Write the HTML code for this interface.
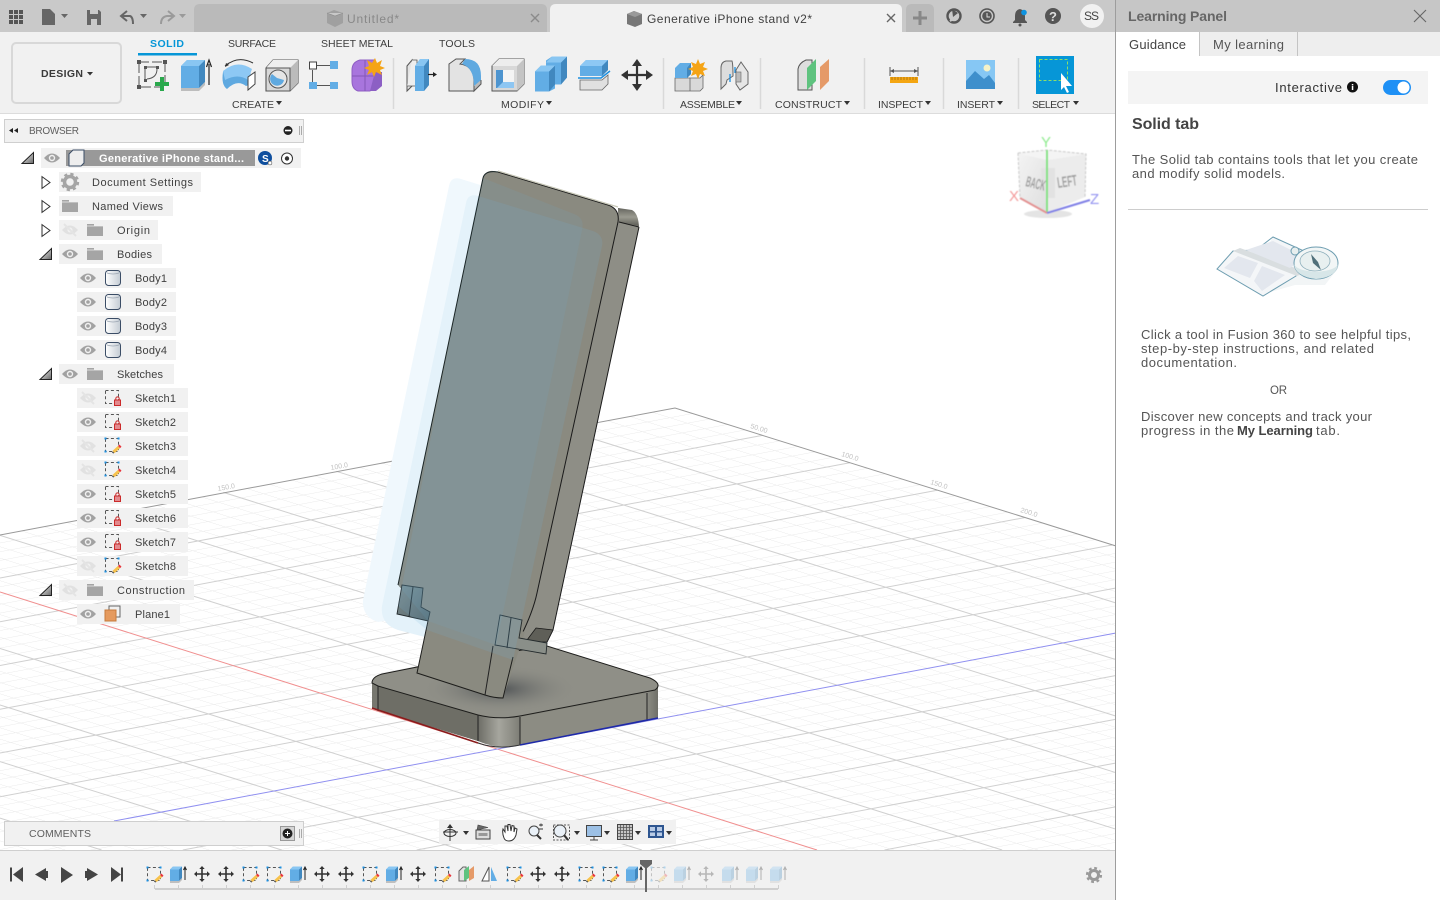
<!DOCTYPE html>
<html><head><meta charset="utf-8"><title>Fusion 360</title>
<style>
html,body{margin:0;padding:0;background:#fff;width:1440px;height:900px;overflow:hidden}
svg{display:block;position:absolute;left:0;top:0}
text{font-family:"Liberation Sans",sans-serif;font-size:11px;fill:#3c3c3c}
.t{font-size:11px;fill:#3f3f3f}
.u{font-size:10.5px;fill:#3c3c3c}
.p{font-size:13px;fill:#555}
.g{font-size:7px;fill:#c2c2c2}
</style></head><body>
<svg width="1440" height="900" viewBox="0 0 1440 900" xmlns="http://www.w3.org/2000/svg">
<defs>
<pattern id="grid" patternUnits="userSpaceOnUse" width="87.4" height="112.9" patternTransform="matrix(1 .314 1 -.187 675 408)">
<g stroke="#ebebeb" stroke-width="1" fill="none">
<path d="M17.5 0V113M35 0V113M52.4 0V113M70 0V113M0 22.6H88M0 45.2H88M0 67.7H88M0 90.3H88"/>
</g>
</pattern>
<filter id="soft" x="-10%" y="-10%" width="120%" height="120%"><feGaussianBlur stdDeviation=".55"/></filter>
<linearGradient id="corner" x1="0" x2="1" y1="0" y2="0"><stop offset="0" stop-color="#6d6d66"/><stop offset=".5" stop-color="#a6a69e"/><stop offset="1" stop-color="#7d7d75"/></linearGradient>
<linearGradient id="cornerR" x1="0" x2="1" y1="0" y2="0"><stop offset="0" stop-color="#8c8c84"/><stop offset="1" stop-color="#6f6f68"/></linearGradient>
<linearGradient id="top" x1="0" x2="0" y1="0" y2="1"><stop offset="0" stop-color="#66665f"/><stop offset=".5" stop-color="#9a9a90"/><stop offset="1" stop-color="#5c5c55"/></linearGradient>
<radialGradient id="shadow" cx=".5" cy=".5" r=".5"><stop offset="0" stop-color="#4c5053" stop-opacity=".95"/><stop offset="1" stop-color="#8f8f87" stop-opacity="0"/></radialGradient>
<linearGradient id="tab" x1="0" x2="1" y1="0" y2="1"><stop offset="0" stop-color="#7f8d8e"/><stop offset="1" stop-color="#55666b"/></linearGradient>
<linearGradient id="cube" x1="0" x2="1" y1="0" y2="1"><stop offset="0" stop-color="#f4f4f4"/><stop offset="1" stop-color="#dedede"/></linearGradient>
<linearGradient id="cyl" x1="0" x2="1" y1="0" y2="0"><stop offset="0" stop-color="#fff"/><stop offset="1" stop-color="#c4ccd4"/></linearGradient>

<symbol id="eye" viewBox="0 0 16 12" overflow="visible"><path d="M0 6Q8-3 16 6 8 15 0 6Z" fill="#a2a2a2"/><circle cx="8" cy="6" r="3.2" fill="#f1f1f1"/><circle cx="8" cy="6" r="1.8" fill="#a2a2a2"/></symbol>
<symbol id="eyeoff" viewBox="0 0 16 12" overflow="visible"><path d="M0 6Q8-3 16 6 8 15 0 6Z" fill="#e1e1e1"/><circle cx="8" cy="6" r="2.5" fill="#f1f1f1"/><path d="M2 0L14 12" stroke="#e4e4e4" stroke-width="2"/></symbol>
<symbol id="folder" viewBox="0 0 16 12" overflow="visible"><path d="M0 0H7V2H16V12H0Z" fill="#a5a5a5"/><path d="M0 2H16" stroke="#f1f1f1" stroke-width=".7"/></symbol>
<symbol id="bd" viewBox="0 0 16 16" overflow="visible"><rect x=".5" y=".5" width="15" height="15" rx="3" fill="url(#cyl)" stroke="#3b4d66"/><path d="M2 3Q8 5 14 3" fill="none" stroke="#9ca6b2" stroke-width=".8"/></symbol>
<symbol id="skl" viewBox="0 0 16 16" overflow="visible"><rect x=".5" y=".5" width="13" height="13" fill="none" stroke="#555" stroke-dasharray="3 2.4"/><rect x="9.5" y="10" width="6" height="5.5" fill="#e38a8e" stroke="#cb2a2a"/><path d="M10.8 10V8.6a1.7 1.7 0 013.4 0V10" fill="none" stroke="#cb2a2a"/></symbol>
<symbol id="skp" viewBox="0 0 16 16" overflow="visible"><rect x=".5" y=".5" width="13" height="13" fill="none" stroke="#555" stroke-dasharray="3 2.4"/><g fill="#1c8fe0"><rect x="-.5" y="-.5" width="2" height="2"/><rect x="12.5" y="-.5" width="2" height="2"/><rect x="-.5" y="12.5" width="2" height="2"/></g><path d="M8.5 14L14 9" stroke="#f7c24c" stroke-width="3"/><path d="M14 9l1.5-1.4" stroke="#e8343b" stroke-width="3"/><path d="M8.5 14L7.6 15" stroke="#555" stroke-width="2"/></symbol>
<symbol id="ext" viewBox="0 0 16 18" overflow="visible"><path d="M0 3.5L3 .5H12V12L9 15H0Z" fill="#62ade5"/><path d="M9 3.5L12 .5V12L9 15Z" fill="#4188bf"/><path d="M0 3.5L3 .5H12L9 3.5Z" fill="#89c6f2"/><path d="M0 15H9L12 12V14L9 17H0Z" fill="#bfbfbf"/><path d="M15 14V2M13.5 4L15 1 16.5 4" stroke="#222" fill="none" stroke-width="1"/></symbol>
<symbol id="mv" viewBox="0 0 16 16" overflow="visible"><path d="M8 2V14M2 8H14" stroke="#333" stroke-width="1.6"/><path d="M8 0L5.3 3H10.7ZM8 16L5.3 13H10.7ZM0 8L3 5.3V10.7ZM16 8L13 5.3V10.7Z" fill="#333"/></symbol>
<symbol id="tri" viewBox="0 0 12 12" overflow="visible"><path d="M0 11.5L11.5 .5V11.5Z" fill="url(#triG)" stroke="#222"/></symbol>
<linearGradient id="triG" x1="0" x2="1" y1="0" y2="1"><stop offset="0" stop-color="#fff"/><stop offset="1" stop-color="#666"/></linearGradient>
<symbol id="tro" viewBox="0 0 10 14" overflow="visible"><path d="M.7.7L9.3 7 .7 13.3Z" fill="#fff" stroke="#333" stroke-width="1.1"/></symbol>
</defs>

<!-- canvas -->
<rect width="1116" height="900" fill="#fff"/>
<polygon points="675,408 1116,546 1116,850 0,850 0,535" fill="url(#grid)"/>
<g fill="none" stroke="#d0d0d0" stroke-width="1">
<path d="M562.100 429.100L1116 603M449.200 450.200L1116 659.600M336.300 471.300L1116 716.100M223.400 492.400L1116 772.700M110.500 513.500L1116 829.200M0 535.400L1002.100 850M0 648.500L641.800 850M0 705L461.800 850M0 761.600L281.700 850M0 818.100L101.600 850"/>
<path d="M762.400 435.400L0 578M849.800 462.800L0 621.700M937.200 490.200L0 665.500M1024.600 517.600L0 709.200M1112 545L0 753M1116 588L0 796.700M1116 675.500L182.800 850M1116 719.200L416.700 850M1116 763L650.600 850M1116 806.700L884.500 850"/>
</g>
<path d="M0 535L675 408 1116 546" fill="none" stroke="#999" stroke-width="1"/>
<path d="M0 592L817 850" stroke="#f08f8f" stroke-width="1"/>
<path d="M114 821L1116 633" stroke="#8f8ff0" stroke-width="1"/>
<text class="g" transform="translate(218 491) rotate(-10)">150.0</text>
<text class="g" transform="translate(331 470) rotate(-10)">100.0</text>
<text class="g" transform="translate(750 428) rotate(17)">50.00</text>
<text class="g" transform="translate(841 456) rotate(17)">100.0</text>
<text class="g" transform="translate(930 484) rotate(17)">150.0</text>
<text class="g" transform="translate(1020 512) rotate(17)">200.0</text>

<!-- ghost phones on white -->
<path d="M449 186Q451 176 461 179L574 214Q585 218 582 230L505 603 378 622Q362 617 363 600Z" fill="#f0f8fd"/>
<path d="M466 203Q468 193 478 196L593 231Q604 235 602 246L513 660 398 630Q380 624 382 606Z" fill="#e4f2fa"/>

<!-- base -->
<path d="M372 683V708L478 741Q500 750 520 745L658 718V687L500 700Z" fill="#87877e"/>
<path d="M372 683V708L378 711V686Z" fill="#77776f"/>
<path d="M378 686V711L478 741V715Z" fill="#6e6e66"/>
<path d="M478 715V741Q498 750 520 745V717Z" fill="url(#corner)"/>
<path d="M520 717V745L647 721V693Z" fill="#8c8c83"/>
<path d="M647 693V721L658 718V687Z" fill="url(#cornerR)"/>
<path d="M372 683Q372 677 382 674L417 667 547 646 650 678Q663 684 655 690L520 716Q498 720 478 715L378 686Z" fill="#8f8f87" stroke="#1d1d1b" stroke-width="1"/>
<ellipse cx="500" cy="689" rx="78" ry="24" fill="url(#shadow)"/>
<path d="M378 686V711M478 715V741M520 717V745M647 693V721" stroke="#222" stroke-width="1"/>
<path d="M372 708L478 743" stroke="#8a1c1c" stroke-width="1.600"/>
<path d="M520 745L658 718" stroke="#1f2aa8" stroke-width="1.600"/>
<path d="M478 743Q498 750 520 745" stroke="#333" fill="none"/>

<!-- side of phone -->
<path d="M618 208L632 211 639 227 553 630 547 642 520 638 537 593 618 222Z" fill="#8e8e86"/>
<path d="M618 208L632 210Q638 213 639 226L619 222Z" fill="url(#top)"/>
<path d="M619 222L639 227M639 227L553 630 547 642" stroke="#1a1a1a" fill="none"/>
<!-- plate -->
<path d="M483 178Q486 168 498 172L608 205Q620 209 618 222L537 593Q533 612 520 638L432 625 398 585Z" fill="#8a8a80"/>
<path d="M498 172L608 205Q620 209 618 222L537 593Q533 612 520 638" fill="none" stroke="#1a1a1a" stroke-width="1"/>
<path d="M498 171L618 207" stroke="#c8c8b8" stroke-width="1.200"/>
<path d="M536 628L553 630 547 642Q535 642 527 640Z" fill="#5f5f58" stroke="#1a1a1a" stroke-width=".8"/>
<!-- stem -->
<path d="M432 605L525 632 503 698Q494 698 485 695L417 673Z" fill="#8a8a80"/>
<path d="M428 621L417 673 485 695Q494 698 503 698L513 657" fill="none" stroke="#1d1d1b"/>
<path d="M493 646L485 695" stroke="#222"/>
<!-- tabs -->
<path d="M402 585L423 588 421 607 430 612 428 621 397 614Z" fill="url(#tab)" stroke="#232a2c" stroke-width=".9"/>
<path d="M413 587L409 617" stroke="#232a2c"/>
<path d="M500 615L522 620 519 638 547 643 546 654 495 645Z" fill="#8a8f89" stroke="#232a2c" stroke-width=".9"/>
<path d="M511 618L507 648" stroke="#232a2c"/>
<!-- ghosts over model -->
<path d="M483 178L574 214Q585 218 582 230L505 603 496 645 428 621 398 585Z" fill="#6fb8dc" fill-opacity=".11"/>
<path d="M478 196L593 231Q604 235 602 246L513 660 427 630 398 606Z" fill="#6fb8dc" fill-opacity=".15"/>
<path d="M483 178L398 585" stroke="#1a2526" stroke-width="1" fill="none"/>
<path d="M483 178Q485 170 498 172" stroke="#1a2526" fill="none"/>

<!-- viewcube -->
<g filter="url(#soft)">
<ellipse cx="1048" cy="214" rx="24" ry="4" fill="#e4e4e4"/>
<path d="M1018 153L1047 160 1047 213 1020 198Z" fill="url(#cube)"/>
<path d="M1047 160L1086 154 1085 197 1047 213Z" fill="#ececec"/>
<path d="M1018 153L1047 150 1086 154 1047 160Z" fill="#f4f4f4"/>
<path d="M1018 153L1047 150 1086 154 1085 197M1018 153L1020 198" fill="none" stroke="#c8c8c8" stroke-dasharray="3 1.500"/>
<rect x="1041" y="168" width="14" height="30" fill="#e2e2e2"/>
<text transform="translate(1025 186) rotate(14) scale(.62 1.35)" style="font-size:11px;font-weight:bold;fill:#9d9d9d">BACK</text>
<text transform="translate(1058 188) rotate(-8) scale(.72 1.4)" style="font-size:11px;font-weight:bold;fill:#9d9d9d">LEFT</text>
<path d="M1047 150V213" stroke="#7fe27f" stroke-width="2"/>
<path d="M1020 198L1047 213" stroke="#e39090" stroke-width="2"/>
<path d="M1047 213L1090 200" stroke="#8080e6" stroke-width="2"/>
<text x="1041" y="147" style="font-size:15px;fill:#8feb8f">Y</text>
<text x="1009" y="201" style="font-size:15px;fill:#f39a9a">X</text>
<text x="1090" y="204" style="font-size:15px;fill:#9494f0">Z</text>
</g>

<!-- top bar -->
<rect width="1116" height="32" fill="#c9c9c9"/>
<rect y="32" width="1116" height="81" fill="#f1f1f1"/>
<rect y="113" width="1116" height="1" fill="#dcdcdc"/>
<g fill="#555"><rect x="9" y="10" width="4" height="4"/><rect x="14" y="10" width="4" height="4"/><rect x="19" y="10" width="4" height="4"/><rect x="9" y="15" width="4" height="4"/><rect x="14" y="15" width="4" height="4"/><rect x="19" y="15" width="4" height="4"/><rect x="9" y="20" width="4" height="4"/><rect x="14" y="20" width="4" height="4"/><rect x="19" y="20" width="4" height="4"/></g>
<path d="M42 9H50L55 14V25H42Z" fill="#666"/><path d="M61 14H68L64.500 18Z" fill="#666"/>
<path d="M87 10H99L101 12V25H87Z" fill="#666"/><rect x="90" y="10" width="8" height="4" fill="#c9c9c9"/><rect x="91" y="19" width="6" height="6" fill="#c9c9c9"/>
<path d="M127 11L121 16 127 21M121 16H130Q133 17 133 24" fill="none" stroke="#666" stroke-width="2"/><path d="M140 14H147L143.500 18Z" fill="#666"/>
<path d="M168 11L174 16 168 21M174 16H167Q161 17 161 24" fill="none" stroke="#9a9a9a" stroke-width="2"/><path d="M179 14H186L182.500 18Z" fill="#9a9a9a"/>

<path d="M194 32V10Q194 4 200 4H541Q547 4 547 10V32Z" fill="#bababa"/>
<path d="M550 32V10Q550 4 556 4H896Q902 4 902 10V32Z" fill="#f1f1f1"/>
<path d="M906 32V10Q906 4 912 4H928Q934 4 934 10V32Z" fill="#bababa"/>
<path d="M920 11V25M913 18H927" stroke="#888" stroke-width="3"/>
<path d="M327 13L334 10 343 13V23L335 27 327 23Z" fill="#a0a0a0"/><path d="M327 13L335 16 343 13" fill="#c8c8c8" stroke="#8a8a8a" stroke-width=".6"/>
<text x="347" y="23" textLength="52" style="font-size:12px;fill:#888">Untitled*</text>
<path d="M531 14L539 22M539 14L531 22" stroke="#8b8b8b" stroke-width="1.400"/>
<path d="M627 14L634 11 642 14V24L635 27 627 24Z" fill="#777"/><path d="M627 14L635 17 642 14 634 11Z" fill="#999"/>
<text x="647" y="23" textLength="165" style="font-size:12px;fill:#3f3f3f">Generative iPhone stand v2*</text>
<path d="M887 14L895 22M895 14L887 22" stroke="#666" stroke-width="1.400"/>
<circle cx="954" cy="16" r="6.500" fill="none" stroke="#555" stroke-width="2.400"/><path d="M952 9L958 13 953 17Z" fill="#555"/><path d="M950 21L956 17" stroke="#c9c9c9" stroke-width="2"/>
<circle cx="987" cy="16" r="7" fill="none" stroke="#555" stroke-width="1.600"/><circle cx="987" cy="16" r="4.800" fill="#555"/><path d="M987 13V17H990" stroke="#ddd" fill="none"/>
<path d="M1020 9Q1015 10 1015 16V20L1013 22V23H1027V22L1025 20V16Q1025 10 1020 9Z" fill="#555"/><circle cx="1020" cy="25" r="1.500" fill="#555"/><circle cx="1024" cy="12.500" r="2.800" fill="#0e93e0"/>
<circle cx="1053" cy="16" r="8" fill="#555"/><text x="1049" y="21" style="font-size:13px;font-weight:bold;fill:#ddd">?</text>
<circle cx="1092" cy="16" r="12" fill="#f1f1f1"/><text x="1084" y="20" textLength="15" style="font-size:12px;fill:#444">SS</text>

<!-- design button -->
<rect x="12" y="43" width="109" height="60" rx="4" fill="#f1f1f1" stroke="#d8d8d8" stroke-width="2"/>
<text x="41" y="77" textLength="42" style="font-weight:bold;fill:#3a3a3a;font-size:10.5px">DESIGN</text>
<path d="M87 72H93L90 75.500Z" fill="#333"/>
<!-- tabs -->
<text class="u" x="150" y="47" textLength="34" style="fill:#0696d7;font-weight:bold">SOLID</text>
<rect x="138" y="53" width="59" height="2.500" fill="#0696d7"/>
<text class="u" x="228" y="47" textLength="48">SURFACE</text>
<text class="u" x="321" y="47" textLength="72">SHEET METAL</text>
<text class="u" x="439" y="47" textLength="36">TOOLS</text>
<g>
<text class="u" x="232" y="108" textLength="42">CREATE</text><path d="M276 101H282L279 105Z" fill="#333"/>
<text class="u" x="501" y="108" textLength="43">MODIFY</text><path d="M546 101H552L549 105Z" fill="#333"/>
<text class="u" x="680" y="108" textLength="55">ASSEMBLE</text><path d="M736 101H742L739 105Z" fill="#333"/>
<text class="u" x="775" y="108" textLength="67">CONSTRUCT</text><path d="M844 101H850L847 105Z" fill="#333"/>
<text class="u" x="878" y="108" textLength="45">INSPECT</text><path d="M925 101H931L928 105Z" fill="#333"/>
<text class="u" x="957" y="108" textLength="38">INSERT</text><path d="M997 101H1003L1000 105Z" fill="#333"/>
<text class="u" x="1032" y="108" textLength="38">SELECT</text><path d="M1073 101H1079L1076 105Z" fill="#333"/>
</g>
<path d="M393.500 58V109M663.500 58V109M760.500 58V109M864.500 58V109M943.500 58V109M1018.500 58V109" stroke="#d9d9d9" stroke-width="1.500"/>

<!-- create sketch -->
<rect x="139" y="62" width="26" height="25" fill="none" stroke="#555" stroke-dasharray="10 3"/>
<g fill="#555"><rect x="137" y="60" width="4" height="4"/><rect x="163" y="60" width="4" height="4"/><rect x="137" y="85" width="4" height="4"/><rect x="144" y="66" width="3" height="3"/><rect x="156" y="66" width="3" height="3"/><rect x="144" y="79" width="3" height="3"/></g>
<path d="M147 67H156M145 69V79M147 79Q157 78 157 69" fill="none" stroke="#555"/>
<path d="M162 77V91M155 84H169" stroke="#29a84c" stroke-width="4"/>
<!-- extrude -->
<path d="M181 66L187 60H205V82L199 88H181Z" fill="#62ade5"/>
<path d="M199 66L205 60V82L199 88Z" fill="#4188bf"/><path d="M181 66L187 60H205L199 66Z" fill="#89c6f2"/>
<path d="M181 88H199L205 82V85L199 91H181Z" fill="#bdbdbd"/><path d="M209 85V64M206.500 67L209 60 211.500 67" fill="none" stroke="#222" stroke-width="1.200"/>
<!-- revolve -->
<g transform="translate(0 -3)">
<path d="M223 75Q237 64 250 74L252 87 246 89Q237 82 227 92Q221 88 223 75Z" fill="#5fa9e0"/><path d="M223 74Q237 62 252 72L248 83Q238 76 225 83Z" fill="#8dc8f4"/><path d="M248 80L255 75V87L248 93Z" fill="#fff" stroke="#444"/>
<path d="M225 69Q238 58 253 66" fill="none" stroke="#333"/><path d="M225 70L226 66 229 68Z" fill="#333"/>
</g>
<!-- hole -->
<path d="M266 68L273 60H298V83L290 91H266Z" fill="#d8d8d8" stroke="#555" stroke-width="1.100"/><path d="M290 68L298 60V83L290 91Z" fill="#bbb"/><path d="M266 68L273 60H298L290 68Z" fill="#eee"/><path d="M266 68H290V91" fill="none" stroke="#555"/>
<circle cx="278" cy="79" r="9" fill="#e6e6e6" stroke="#555"/><path d="M272 74A7 7 0 1 0 284 80L277 78Z" fill="#5fa9e0"/>
<!-- pattern -->
<rect x="309.500" y="62" width="7" height="7" fill="#fff" stroke="#444"/><rect x="330" y="61" width="8" height="8" fill="#62ade5"/><rect x="309" y="82" width="8" height="7" fill="#62ade5"/><rect x="330" y="82" width="8" height="7" fill="#62ade5"/>
<path d="M317 65.500H330M312.500 70V82M317 85.500H330" stroke="#555"/>
<!-- form -->
<path d="M352 70Q352 62 360 60H375V86L370 91H358Q352 89 352 81Z" fill="#a875dd" stroke="#8f5ec4"/><path d="M365 60V91M352 76H378" stroke="#8558b8"/><path d="M375 72H382V86L376 91H370Z" fill="#8c5fc4"/>
<path d="M375 58l2 5 5-3-2 6 5 2-5 2 2 5-6-3-2 5-2-5-5 3 2-5-5-2 5-2-2-6 5 3Z" fill="#f5a415"/>
<!-- press pull -->
<path d="M407 66L412 60V86L407 91Z" fill="#e3e3e3" stroke="#555"/><path d="M412 60H417V86H407" fill="#eee" stroke="#555" stroke-width=".8"/>
<path d="M415 66L420 59H429V85L424 91H415Z" fill="#62ade5"/><path d="M424 66L429 59V85L424 91Z" fill="#4188bf"/><path d="M415 66L420 59H429L424 66Z" fill="#89c6f2"/>
<path d="M428 74.500H434" stroke="#222" stroke-width="1.200"/><path d="M433 72L437 74.500 433 77Z" fill="#222"/>
<!-- fillet -->
<g transform="translate(0 -6)">
<path d="M449 70L456 65H465L460 70Q474 72 474 87V97H449Z" fill="#e3e3e3" stroke="#555"/>
<path d="M462 70L465 65Q481 65 481 82V87L474 92Q474 74 462 70Z" fill="#5fa9e0"/>
<path d="M474 92V97L481 90V86" fill="#bbb" stroke="#555"/>
</g>
<!-- shell -->
<path d="M492 66L499 59H524V84L517 91H492Z" fill="#d8d8d8" stroke="#555"/><path d="M517 66L524 59V84L517 91Z" fill="#c4c4c4"/><path d="M492 66L499 59H524L517 66Z" fill="#ededed"/>
<rect x="496" y="70" width="18" height="18" fill="#f4f4f4"/><path d="M496 70H503V82H514V88H496Z" fill="#4d94cf"/><path d="M503 82H514V88H497Z" fill="#8ec6f2"/>
<!-- combine -->
<g transform="translate(0 -1.500)">
<path d="M535 73L541 67H546V62L552 58H567V79L561 86H555V90L549 93H535Z" fill="#62ade5"/>
<path d="M549 73L555 67V86L549 93Z" fill="#4188bf"/><path d="M561 64L567 58V79L561 86Z" fill="#4188bf"/><path d="M546 64L552 58H567L561 64Z" fill="#89c6f2"/><path d="M535 73L541 67H555L549 73Z" fill="#89c6f2"/>
</g>
<!-- offset -->
<path d="M580 66L586 60H608V70L602 76H580Z" fill="#62ade5"/><path d="M580 66L586 60H608L602 66Z" fill="#8dc8f4"/><path d="M602 66L608 60V70L602 76Z" fill="#4188bf"/>
<path d="M578 78H601L610 71" fill="none" stroke="#1c8fe0" stroke-width="1.500"/>
<path d="M580 80H602L608 75V84L602 90H580Z" fill="#e0e0e0" stroke="#666" stroke-width=".8"/>
<!-- move -->
<path d="M637 65V85M626 75H648" stroke="#333" stroke-width="2.200"/><path d="M637 59L632 66H642ZM637 91L632 84H642ZM621 75L628 70V80ZM653 75L646 70V80Z" fill="#333"/>
<!-- assemble -->
<path d="M675 78H690V91H675ZM690 78H700L703 75V88L700 91H690Z" fill="#d9d9d9" stroke="#666" stroke-width=".8"/>
<path d="M675 68L680 63H691V74L687 78H675Z" fill="#62ade5"/><path d="M687 68L691 63V74L687 78Z" fill="#4188bf"/>
<path d="M698 59l2 5 5-2-2 5 5 2-5 2 2 5-5-2-2 5-2-5-5 2 2-5-5-2 5-2-2-5 5 2Z" fill="#f5a415"/>
<!-- joint -->
<g transform="translate(0 -8)">
<path d="M721 76Q721 70 726 69H732Q733 72 733 84L727 88 726 92 721 97Z" fill="#ddd" stroke="#666"/><path d="M735 75V81M730 82V90" stroke="#1c8fe0" stroke-width="1.300" fill="none"/>
<path d="M736 78L741 70 748 80V92L740 98 736 92Z" fill="#e6e6e6" stroke="#666"/><rect x="736" y="80" width="5" height="10" fill="#bbb" stroke="#666" stroke-width=".6"/>
</g>
<!-- construct -->
<path d="M798 69Q799 63 806 60H812V90H798Z" fill="#dedede" stroke="#555"/><path d="M807 90V68L816 59V81Z" fill="#5fc37f"/><path d="M820 90V67L829 59V81Z" fill="#e59a68"/>
<!-- inspect -->
<path d="M890 71H918M890 67V76M918 67V76" stroke="#555"/><path d="M890 71L894 69V73ZM918 71L914 69V73Z" fill="#555"/><rect x="890" y="77" width="28" height="6" fill="#f4a612"/><path d="M892 77V80M895 77V80M898 77V80M901 77V80M904 77V80M907 77V80M910 77V80M913 77V80M916 77V80" stroke="#8d5a06" stroke-width=".6"/>
<!-- insert -->
<rect x="966" y="60" width="29" height="29" fill="#86c7f4"/><circle cx="987" cy="68" r="3.500" fill="#f6f2c8"/><path d="M966 81L975 71 984 79 989 75 995 83V89H966Z" fill="#3e8fcc"/>
<!-- select -->
<rect x="1036" y="56" width="38" height="38" fill="#0696d7"/>
<rect x="1039.500" y="59.500" width="28" height="21" fill="none" stroke="#8ddf68" stroke-dasharray="3 2" stroke-width="1"/>
<path d="M1061 73V90L1064 87 1067 93 1069 92 1066 86H1072Z" fill="#fff"/>

<!-- browser -->
<rect x="4.500" y="119.500" width="299" height="23" fill="#f1f1f1" stroke="#cfcfcf"/>
<path d="M9 130.500L13 128V133ZM14 130.500L18 128V133Z" fill="#222"/>
<text x="29" y="134" textLength="50" style="fill:#5e5e5e;font-size:10px">BROWSER</text>
<circle cx="288" cy="130.500" r="4.500" fill="#222"/><rect x="285" y="129.700" width="6" height="1.600" fill="#fff"/>
<path d="M299.500 126V135M301.500 126V135" stroke="#aaa"/>

<rect x="41" y="148" width="260" height="20" fill="#f1f1f1"/>
<rect x="66" y="150" width="189" height="16" fill="#999"/>
<use href="#tri" x="22" y="152" width="12" height="12"/>
<use href="#eye" x="44" y="152" width="16" height="12"/>
<path d="M69 154L73 150H84V163L81 166H69Z" fill="#eee" stroke="#3b4d66"/>
<text x="99" y="162" textLength="145" style="font-weight:bold;fill:#fff;font-size:11px">Generative iPhone stand...</text>
<circle cx="265" cy="158" r="7" fill="#0f4f9e"/><text x="262" y="162" style="font-size:10px;font-weight:bold;fill:#fff">S</text><circle cx="270" cy="163" r="2" fill="#fff" stroke="#333" stroke-width=".5"/>
<circle cx="287" cy="158.500" r="5.500" fill="#fff" stroke="#333"/><circle cx="287" cy="158.500" r="2.200" fill="#333"/>

<g fill="#f1f1f1">
<rect x="59" y="172" width="142" height="20"/><rect x="59" y="196" width="114" height="20"/><rect x="59" y="220" width="99" height="20"/><rect x="59" y="244" width="103" height="20"/>
<rect x="77" y="268" width="99" height="20"/><rect x="77" y="292" width="99" height="20"/><rect x="77" y="316" width="99" height="20"/><rect x="77" y="340" width="99" height="20"/>
<rect x="59" y="364" width="115" height="20"/>
<rect x="77" y="388" width="111" height="20"/><rect x="77" y="412" width="111" height="20"/><rect x="77" y="436" width="111" height="20"/><rect x="77" y="460" width="111" height="20"/><rect x="77" y="484" width="111" height="20"/><rect x="77" y="508" width="111" height="20"/><rect x="77" y="532" width="111" height="20"/><rect x="77" y="556" width="111" height="20"/>
<rect x="59" y="580" width="135" height="20"/><rect x="77" y="604" width="103" height="20"/>
</g>
<use href="#tro" x="41" y="176" width="10" height="13"/><use href="#tro" x="41" y="200" width="10" height="13"/><use href="#tro" x="41" y="224" width="10" height="13"/>
<use href="#tri" x="40" y="248" width="12" height="12"/><use href="#tri" x="40" y="368" width="12" height="12"/><use href="#tri" x="40" y="584" width="12" height="12"/>
<!-- gear -->
<circle cx="70" cy="182" r="5.500" fill="none" stroke="#a5a5a5" stroke-width="3.500"/><circle cx="70" cy="182" r="8" fill="none" stroke="#a5a5a5" stroke-width="2.400" stroke-dasharray="3.200 3.100"/>
<use href="#folder" x="62" y="200" width="16" height="12"/>
<use href="#eyeoff" x="62" y="224" width="16" height="12"/><use href="#folder" x="87" y="224" width="16" height="12"/>
<use href="#eye" x="62" y="248" width="16" height="12"/><use href="#folder" x="87" y="248" width="16" height="12"/>
<use href="#eye" x="62" y="368" width="16" height="12"/><use href="#folder" x="87" y="368" width="16" height="12"/>
<use href="#eyeoff" x="62" y="584" width="16" height="12"/><use href="#folder" x="87" y="584" width="16" height="12"/>
<use href="#eye" x="80" y="272" width="16" height="12"/><use href="#bd" x="105" y="270" width="16" height="16"/>
<use href="#eye" x="80" y="296" width="16" height="12"/><use href="#bd" x="105" y="294" width="16" height="16"/>
<use href="#eye" x="80" y="320" width="16" height="12"/><use href="#bd" x="105" y="318" width="16" height="16"/>
<use href="#eye" x="80" y="344" width="16" height="12"/><use href="#bd" x="105" y="342" width="16" height="16"/>
<use href="#eyeoff" x="80" y="392" width="16" height="12"/><use href="#skl" x="105" y="390" width="16" height="16"/>
<use href="#eye" x="80" y="416" width="16" height="12"/><use href="#skl" x="105" y="414" width="16" height="16"/>
<use href="#eyeoff" x="80" y="440" width="16" height="12"/><use href="#skp" x="105" y="438" width="16" height="16"/>
<use href="#eyeoff" x="80" y="464" width="16" height="12"/><use href="#skp" x="105" y="462" width="16" height="16"/>
<use href="#eye" x="80" y="488" width="16" height="12"/><use href="#skl" x="105" y="486" width="16" height="16"/>
<use href="#eye" x="80" y="512" width="16" height="12"/><use href="#skl" x="105" y="510" width="16" height="16"/>
<use href="#eye" x="80" y="536" width="16" height="12"/><use href="#skl" x="105" y="534" width="16" height="16"/>
<use href="#eyeoff" x="80" y="560" width="16" height="12"/><use href="#skp" x="105" y="558" width="16" height="16"/>
<use href="#eye" x="80" y="608" width="16" height="12"/>
<rect x="109" y="606" width="11" height="11" fill="none" stroke="#666"/><rect x="105" y="610" width="11" height="11" fill="#e59a5e" stroke="#c67a3c"/>

<g class="tx">
<text class="t" x="92" y="186" textLength="101">Document Settings</text>
<text class="t" x="92" y="210" textLength="71">Named Views</text>
<text class="t" x="117" y="234" textLength="33">Origin</text>
<text class="t" x="117" y="258" textLength="35">Bodies</text>
<text class="t" x="135" y="282" textLength="32">Body1</text>
<text class="t" x="135" y="306" textLength="32">Body2</text>
<text class="t" x="135" y="330" textLength="32">Body3</text>
<text class="t" x="135" y="354" textLength="32">Body4</text>
<text class="t" x="117" y="378" textLength="46">Sketches</text>
<text class="t" x="135" y="402" textLength="41">Sketch1</text>
<text class="t" x="135" y="426" textLength="41">Sketch2</text>
<text class="t" x="135" y="450" textLength="41">Sketch3</text>
<text class="t" x="135" y="474" textLength="41">Sketch4</text>
<text class="t" x="135" y="498" textLength="41">Sketch5</text>
<text class="t" x="135" y="522" textLength="41">Sketch6</text>
<text class="t" x="135" y="546" textLength="41">Sketch7</text>
<text class="t" x="135" y="570" textLength="41">Sketch8</text>
<text class="t" x="117" y="594" textLength="68">Construction</text>
<text class="t" x="135" y="618" textLength="35">Plane1</text>
</g>

<!-- comments -->
<rect x="4.500" y="821.500" width="299" height="24" fill="#f1f1f1" stroke="#cfcfcf"/>
<text x="29" y="837" textLength="62" style="fill:#5e5e5e;font-size:10.5px">COMMENTS</text>
<rect x="280.500" y="826.500" width="14" height="14" fill="#d5d5d5" stroke="#999"/><circle cx="287.500" cy="833.500" r="5" fill="#222"/><path d="M285 833.500H290M287.500 831V836" stroke="#fff"/>
<path d="M299.500 829V838M301.500 829V838" stroke="#aaa"/>

<!-- nav bar -->
<rect x="439" y="820" width="237" height="24" fill="#f1f1f1"/>
<g fill="none" stroke="#333" stroke-width="1">
<path d="M450 825V841M443 832H458"/><ellipse cx="450" cy="833" rx="6" ry="3.500"/>
</g>
<path d="M450 824L447 828H453ZM463 831H469L466 835Z" fill="#333"/>
<rect x="476" y="830" width="14" height="9" fill="#ddd" stroke="#444"/><rect x="478.500" y="833" width="9" height="3" fill="#999"/><path d="M477 830L478 825 488 827.500 477 830" fill="#666" stroke="#444" stroke-width=".6"/>
<path d="M504 838Q502 833 503 829L505 832V826L507 826 508 831V824.500H510L511 831 512 825.500 514 826 514 832 515 828 517 829 516 835Q514 841 509 841Q505 841 504 838Z" fill="#fff" stroke="#333"/>
<circle cx="534" cy="831" r="5" fill="#e9f0f7" stroke="#444"/><path d="M537 835L541 839" stroke="#333" stroke-width="2"/><path d="M539 825H543M541 823.500V826.500M539 829H543" stroke="#333" stroke-width=".9"/>
<rect x="553.500" y="825" width="16" height="15" fill="none" stroke="#555" stroke-dasharray="2 1.500"/><circle cx="560" cy="831" r="6" fill="#e9f0f7" stroke="#444"/><path d="M564 835L568 840" stroke="#333" stroke-width="2.200"/><path d="M574 831H580L577 835Z" fill="#333"/>
<rect x="586.500" y="825.500" width="15" height="11" fill="#9cc0e5" stroke="#444"/><path d="M590 840H598M594 837V840" stroke="#444"/><path d="M604 831H610L607 835Z" fill="#333"/>
<rect x="617.500" y="824.500" width="15" height="15" fill="#c6c6c6" stroke="#444"/><path d="M620.500 825V839M623.500 825V839M626.500 825V839M629.500 825V839M618 827.500H632M618 830.500H632M618 833.500H632M618 836.500H632" stroke="#555" stroke-width=".8"/><path d="M635 831H641L638 835Z" fill="#333"/>
<rect x="648.500" y="825.500" width="15" height="12" fill="#2d5590" stroke="#2d5590"/><path d="M650 827H655V831H650ZM657 827H662V831H657ZM650 832.500H655V836H650ZM657 832.500H662V836H657Z" fill="#b8cbe6"/><path d="M666 831H672L669 835Z" fill="#333"/>

<!-- timeline -->
<rect y="850" width="1116" height="50" fill="#f1f1f1"/><rect y="850" width="1116" height="1" fill="#cfcfcf"/>
<path d="M11 867.500V881.500" stroke="#444" stroke-width="2"/><path d="M23 867V882L13 874.500Z" fill="#444"/>
<path d="M46 868V881L35 874.500Z" fill="#444"/><rect x="46" y="871" width="2" height="7" fill="#444"/>
<path d="M61 867V883L73 875Z" fill="#444"/>
<path d="M87 868V881L98 874.500Z" fill="#444"/><rect x="85" y="871" width="2" height="7" fill="#444"/>
<path d="M111 867V882L121 874.500Z" fill="#444"/><path d="M122 867.500V881.500" stroke="#444" stroke-width="2"/>
<path d="M155 889H778" stroke="#cfcfcf" stroke-width="2"/>
<path d="M154.500 885V889M178.500 885V889M202.500 885V889M226.500 885V889M250.500 885V889M274.500 885V889M298.500 885V889M322.500 885V889M346.500 885V889M370.500 885V889M394.500 885V889M418.500 885V889M442.500 885V889M466.500 885V889M490.500 885V889M514.500 885V889M538.500 885V889M562.500 885V889M586.500 885V889M610.500 885V889M634.500 885V889M658.500 885V889M682.500 885V889M706.500 885V889M730.500 885V889M754.500 885V889M778.500 885V889" stroke="#cfcfcf" stroke-width="1"/>
<use href="#skp" x="147" y="867" width="16" height="16"/>
<use href="#ext" x="170" y="866" width="16" height="18"/>
<use href="#mv" x="194" y="866" width="16" height="16"/>
<use href="#mv" x="218" y="866" width="16" height="16"/>
<use href="#skp" x="243" y="867" width="16" height="16"/>
<use href="#skp" x="267" y="867" width="16" height="16"/>
<use href="#ext" x="290" y="866" width="16" height="18"/>
<use href="#mv" x="314" y="866" width="16" height="16"/>
<use href="#mv" x="338" y="866" width="16" height="16"/>
<use href="#skp" x="363" y="867" width="16" height="16"/>
<use href="#ext" x="386" y="866" width="16" height="18"/>
<use href="#mv" x="410" y="866" width="16" height="16"/>
<use href="#skp" x="435" y="867" width="16" height="16"/>
<path d="M459 871L463 867H466V881H459Z" fill="#e3e3e3" stroke="#666"/><path d="M464 881V870L469 866V878Z" fill="#5fc37f"/><path d="M469 881V870L474 866V878Z" fill="#e59a68"/>
<path d="M482 881H489V867Z" fill="#fff" stroke="#555"/><path d="M491 867V881H497Z" fill="#62ade5"/>
<use href="#skp" x="507" y="867" width="16" height="16"/>
<use href="#mv" x="530" y="866" width="16" height="16"/>
<use href="#mv" x="554" y="866" width="16" height="16"/>
<use href="#skp" x="579" y="867" width="16" height="16"/>
<use href="#skp" x="603" y="867" width="16" height="16"/>
<use href="#ext" x="626" y="866" width="16" height="18"/>
<g opacity=".3">
<use href="#skp" x="651" y="867" width="16" height="16"/>
<use href="#ext" x="674" y="866" width="16" height="18"/>
<use href="#mv" x="698" y="866" width="16" height="16"/>
<use href="#ext" x="722" y="866" width="16" height="18"/>
<use href="#ext" x="746" y="866" width="16" height="18"/>
<use href="#ext" x="770" y="866" width="16" height="18"/>
</g>
<path d="M640 860H652V864L646 869 640 864Z" fill="#666"/><rect x="645" y="866" width="2" height="26" fill="#666"/>
<circle cx="1094" cy="875" r="4.500" fill="none" stroke="#999" stroke-width="3"/><circle cx="1094" cy="875" r="7" fill="none" stroke="#999" stroke-width="2.200" stroke-dasharray="2.800 2.700"/>

<!-- right panel -->
<rect x="1115" width="325" height="900" fill="#fff"/>
<rect x="1115" width="1" height="900" fill="#9d9d9d"/>
<rect x="1116" width="324" height="32" fill="#c6c6c6"/>
<text x="1128" y="21" textLength="99" style="font-size:14px;font-weight:bold;fill:#666">Learning Panel</text>
<path d="M1414 10L1426 22M1426 10L1414 22" stroke="#666" stroke-width="1.100"/>
<rect x="1116" y="32" width="324" height="24" fill="#eee"/>
<rect x="1116" y="32" width="83" height="24" fill="#fff"/>
<path d="M1199.500 32V56M1297.500 32V56" stroke="#c4c4c4"/>
<text x="1129" y="49" textLength="57" style="font-size:13px;fill:#444">Guidance</text>
<text x="1213" y="49" textLength="71" style="font-size:13px;fill:#555">My learning</text>
<rect x="1128" y="71" width="300" height="33" fill="#f4f4f4"/>
<text x="1275" y="92" textLength="67" style="font-size:13px;fill:#333">Interactive</text>
<circle cx="1352.500" cy="87" r="5.500" fill="#111"/><rect x="1351.800" y="86" width="1.500" height="4" fill="#fff"/><rect x="1351.800" y="84" width="1.500" height="1.400" fill="#fff"/>
<rect x="1383" y="80" width="28" height="15" rx="7.500" fill="#1e90f5"/><circle cx="1403.500" cy="87.500" r="6" fill="#fff"/>
<text x="1132" y="129" textLength="67" style="font-size:16px;font-weight:bold;fill:#444">Solid tab</text>
<text class="p" x="1132" y="164" textLength="286">The Solid tab contains tools that let you create</text>
<text class="p" x="1132" y="178" textLength="153">and modify solid models.</text>
<rect x="1128" y="209" width="300" height="1" fill="#cdcdcd"/>

<!-- map -->
<path d="M1260 295L1300 272 1338 268 1325 285 1295 285Z" fill="#f2f5f6"/>
<path d="M1217 269L1233 251 1265 250 1273 237 1315 256 1297 275 1263 296Z" fill="#f4f6f8"/>
<path d="M1233 251L1217 269 1263 296 1296 276 1296 275 1315 256 1273 237 1256 250Z" fill="none" stroke="#6d9db0" stroke-width="1"/>
<path d="M1233 251L1297 276 1306 272 1240 248Z" fill="#d9dee0"/>
<path d="M1224 268L1238 256 1258 263 1250 278ZM1254 281L1262 266 1285 275 1262 291ZM1246 250L1290 268 1305 257 1273 241Z" fill="#e3e7ee"/>
<circle cx="1295" cy="251" r="4" fill="#e7eeee" stroke="#6d9db0"/>
<ellipse cx="1316" cy="263" rx="22" ry="16" fill="#f2f6f6" stroke="#6d9db0" stroke-width="1"/>
<path d="M1294 263Q1294 276 1316 279 1338 277 1338 263 1338 270 1316 272 1294 270 1294 263Z" fill="#d7e6e8"/>
<ellipse cx="1315" cy="261" rx="15" ry="10" fill="#e8f0f0" stroke="#8fb0bc" stroke-width=".8"/>
<path d="M1311 254L1318 262 1321 270 1313 263Z" fill="#50707a"/>

<text class="p" x="1141" y="339" textLength="270">Click a tool in Fusion 360 to see helpful tips,</text>
<text class="p" x="1141" y="353" textLength="233">step-by-step instructions, and related</text>
<text class="p" x="1141" y="367" textLength="96">documentation.</text>
<text x="1270" y="394" textLength="17" style="font-size:11.500px;fill:#555">OR</text>
<text class="p" x="1141" y="421" textLength="231">Discover new concepts and track your</text>
<text class="p" x="1141" y="435" textLength="93">progress in the</text>
<text class="p" x="1237" y="435" textLength="76" style="font-weight:bold;fill:#444">My Learning</text>
<text class="p" x="1316" y="435" textLength="24">tab.</text>
</svg>
</body></html>
